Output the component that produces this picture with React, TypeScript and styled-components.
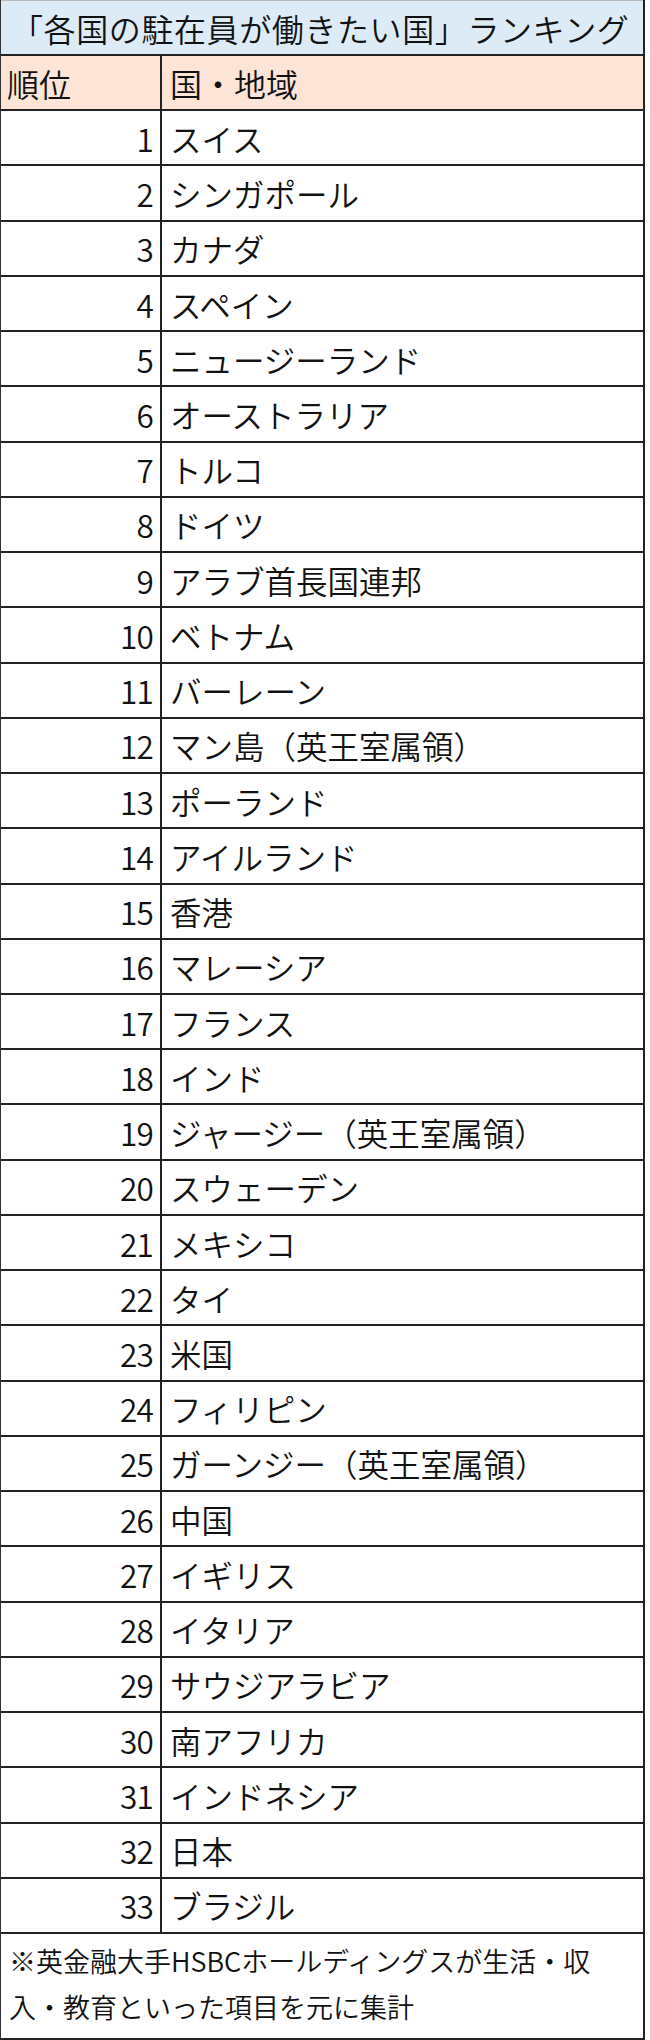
import React from "react";
import styled, { createGlobalStyle } from "styled-components";

const GlobalStyle = createGlobalStyle`
  html, body {
    margin: 0;
    padding: 0;
    background: #ffffff;
  }
  body {
    font-family: "Noto Sans CJK JP", "Noto Sans", sans-serif;
    font-weight: 350;
    color: #111111;
  }
`;

const Table = styled.div`
  width: 645px;
  display: flex;
  flex-direction: column;
  box-sizing: border-box;
  border-left: 1px solid #333333;
  border-right: 2px solid #222222;
  border-bottom: 2px solid #222222;
`;

const Title = styled.div`
  box-sizing: border-box;
  height: 56px;
  display: flex;
  align-items: center;
  padding-left: 10px;
  background: #ddebf7;
  border-top: 1px solid #b8b8b8;
  border-bottom: 2px solid #222222;
  font-size: 32px;
  letter-spacing: 0.6px;
  white-space: nowrap;
  overflow: hidden;
`;

const Row = styled.div<{ $header?: boolean }>`
  box-sizing: border-box;
  height: 55.24px;
  display: grid;
  grid-template-columns: 161px 1fr;
  background: ${(p) => (p.$header ? "#fce4d6" : "#ffffff")};
  border-bottom: 2px solid #222222;
`;

const RankCell = styled.div<{ $header?: boolean }>`
  display: flex;
  align-items: center;
  justify-content: ${(p) => (p.$header ? "flex-start" : "flex-end")};
  padding: ${(p) => (p.$header ? "0 0 0 6px" : "0 7px 0 0")};
  border-right: 2px solid #222222;
  font-size: ${(p) => (p.$header ? "32px" : "31.5px")};
  letter-spacing: ${(p) => (p.$header ? "0" : "-0.8px")};
  white-space: nowrap;
`;

const NameCell = styled.div<{ $header?: boolean }>`
  display: flex;
  align-items: center;
  padding-left: 8px;
  font-size: ${(p) => (p.$header ? "32px" : "31.5px")};
  white-space: nowrap;
`;

const Footer = styled.div`
  box-sizing: border-box;
  height: 104px;
  padding: 4px 0 0 8px;
  font-size: 27px;
  line-height: 46.5px;
`;

const rows: string[] = [
  "スイス",
  "シンガポール",
  "カナダ",
  "スペイン",
  "ニュージーランド",
  "オーストラリア",
  "トルコ",
  "ドイツ",
  "アラブ首長国連邦",
  "ベトナム",
  "バーレーン",
  "マン島（英王室属領）",
  "ポーランド",
  "アイルランド",
  "香港",
  "マレーシア",
  "フランス",
  "インド",
  "ジャージー（英王室属領）",
  "スウェーデン",
  "メキシコ",
  "タイ",
  "米国",
  "フィリピン",
  "ガーンジー（英王室属領）",
  "中国",
  "イギリス",
  "イタリア",
  "サウジアラビア",
  "南アフリカ",
  "インドネシア",
  "日本",
  "ブラジル",
];

export default function App() {
  return (
    <>
      <GlobalStyle />
      <Table>
        <Title>「各国の駐在員が働きたい国」ランキング</Title>
        <Row $header>
          <RankCell $header>順位</RankCell>
          <NameCell $header>国・地域</NameCell>
        </Row>
        {rows.map((name, i) => (
          <Row key={name}>
            <RankCell>{i + 1}</RankCell>
            <NameCell>{name}</NameCell>
          </Row>
        ))}
        <Footer>
          ※英金融大手HSBCホールディングスが生活・収
          <br />
          入・教育といった項目を元に集計
        </Footer>
      </Table>
    </>
  );
}
